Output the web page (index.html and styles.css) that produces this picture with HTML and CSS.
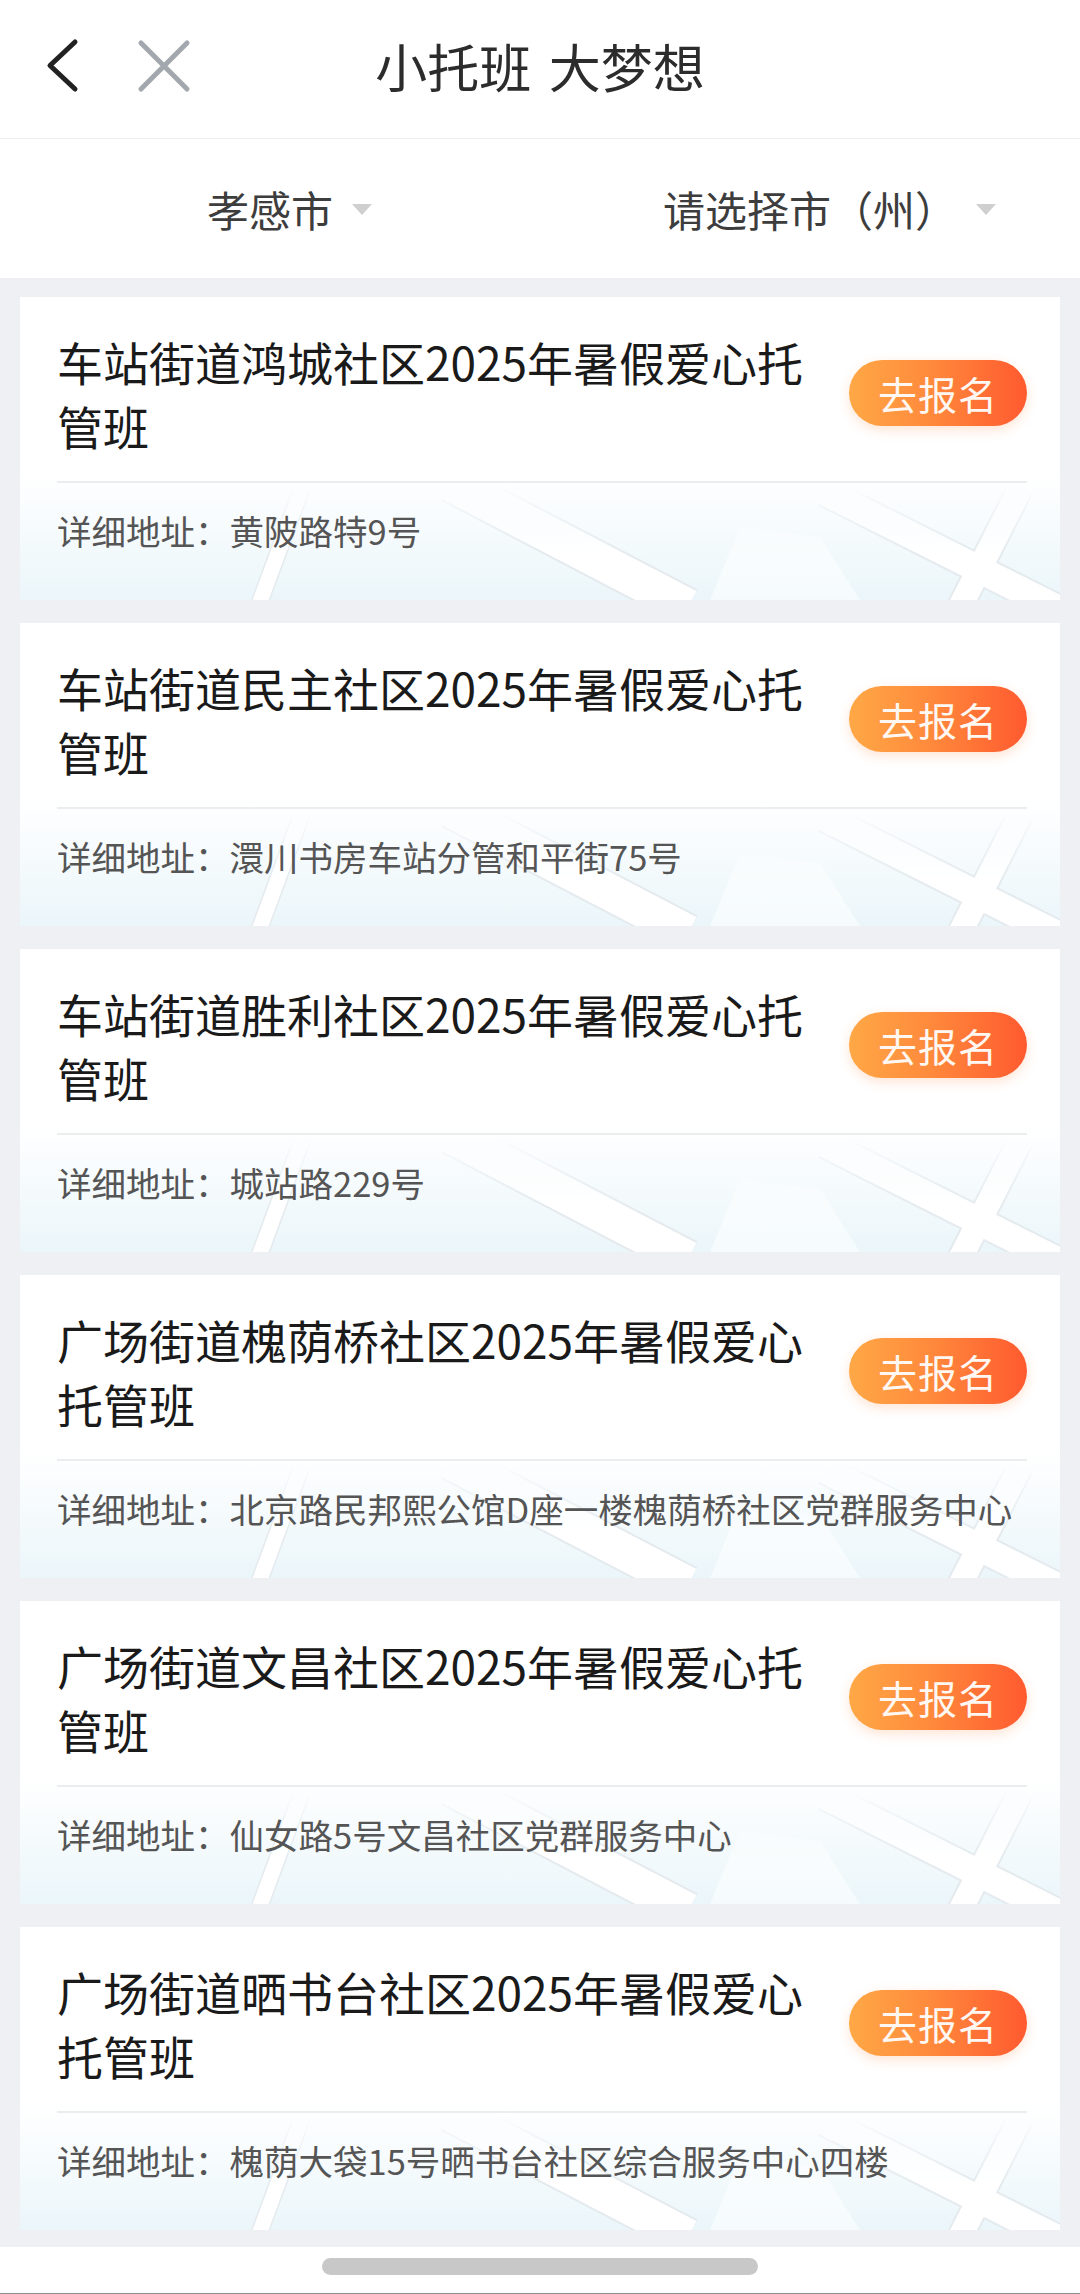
FILE: index.html
```html
<!DOCTYPE html>
<html lang="zh-CN">
<head>
<meta charset="utf-8">
<title>小托班 大梦想</title>
<link rel="stylesheet" href="styles.css">
</head>
<body>
<div class="page">
  <header class="topbar">
    <div class="topbar-left">
      <svg class="icon-back" width="36" height="56" viewBox="0 0 36 56"><path d="M31 4 L6 27.5 L31 51" fill="none" stroke="#222" stroke-width="5" stroke-linecap="round" stroke-linejoin="round"/></svg>
      <svg class="icon-close" width="56" height="56" viewBox="0 0 56 56"><path d="M5 5 L51 51 M51 5 L5 51" fill="none" stroke="#a3a7ae" stroke-width="5" stroke-linecap="round"/></svg>
    </div>
    <h1 class="topbar-title">小托班 大梦想</h1>
    <div></div>
  </header>

  <nav class="filters">
    <div class="filter"><span class="filter-text">孝感市</span><span class="caret"></span></div>
    <div class="filter"><span class="filter-text">请选择市（州）</span><span class="caret"></span></div>
  </nav>

  <main class="list">
    <section class="card">
      <div class="card-top">
        <h2 class="card-title">车站街道鸿城社区2025年暑假爱心托管班</h2>
        <a class="btn">去报名</a>
      </div>
      <div class="card-sep"></div>
      <p class="card-addr">详细地址：黄陂路特9号</p>
    </section>
    <section class="card">
      <div class="card-top">
        <h2 class="card-title">车站街道民主社区2025年暑假爱心托管班</h2>
        <a class="btn">去报名</a>
      </div>
      <div class="card-sep"></div>
      <p class="card-addr">详细地址：澴川书房车站分管和平街75号</p>
    </section>
    <section class="card">
      <div class="card-top">
        <h2 class="card-title">车站街道胜利社区2025年暑假爱心托管班</h2>
        <a class="btn">去报名</a>
      </div>
      <div class="card-sep"></div>
      <p class="card-addr">详细地址：城站路229号</p>
    </section>
    <section class="card">
      <div class="card-top">
        <h2 class="card-title">广场街道槐荫桥社区2025年暑假爱心托管班</h2>
        <a class="btn">去报名</a>
      </div>
      <div class="card-sep"></div>
      <p class="card-addr">详细地址：北京路民邦熙公馆D座一楼槐荫桥社区党群服务中心</p>
    </section>
    <section class="card">
      <div class="card-top">
        <h2 class="card-title">广场街道文昌社区2025年暑假爱心托管班</h2>
        <a class="btn">去报名</a>
      </div>
      <div class="card-sep"></div>
      <p class="card-addr">详细地址：仙女路5号文昌社区党群服务中心</p>
    </section>
    <section class="card">
      <div class="card-top">
        <h2 class="card-title">广场街道晒书台社区2025年暑假爱心托管班</h2>
        <a class="btn">去报名</a>
      </div>
      <div class="card-sep"></div>
      <p class="card-addr">详细地址：槐荫大袋15号晒书台社区综合服务中心四楼</p>
    </section>
  </main>

  <footer class="homebar"><span class="pill"></span></footer>
</div>
</body>
</html>
```

FILE: styles.css
```css
* { box-sizing: border-box; }
html, body {
  margin: 0;
  padding: 0;
  background: #eef0f3;
}
body {
  font-family: "Noto Sans CJK SC", "Noto Sans", sans-serif;
  color: #1c1c1c;
}
.page {
  width: 1080px;
  height: 2294px;
  display: flex;
  flex-direction: column;
  overflow: hidden;
}

/* top bar */
.topbar {
  height: 139px;
  background: #fff;
  border-bottom: 1px solid #ececec;
  display: grid;
  grid-template-columns: 1fr auto 1fr;
  align-items: center;
  padding-bottom: 6px;
}
.topbar-left {
  display: flex;
  align-items: center;
  padding-left: 44px;
  gap: 56px;
}
.icon-back, .icon-close { display: block; }
.topbar-title {
  margin: 0;
  font-size: 52px;
  font-weight: 400;
  color: #2c2c2c;
  line-height: 1;
  word-spacing: 6px;
}

/* filters */
.filters {
  height: 139px;
  background: #fff;
  display: grid;
  grid-template-columns: 1fr 1fr;
  align-items: center;
}
.filter {
  display: flex;
  justify-content: center;
  align-items: center;
}
.filter-text {
  font-size: 42px;
  color: #3d3d3d;
  line-height: 1;
}
.caret {
  width: 0;
  height: 0;
  border-left: 10px solid transparent;
  border-right: 10px solid transparent;
  border-top: 11px solid #cfcfcf;
  margin-left: 19px;
  margin-right: -39px;
  margin-top: 2px;
}

/* list */
.list {
  flex: 1;
  padding: 19px 20px 17px 20px;
  display: flex;
  flex-direction: column;
  gap: 23px;
}
.card {
  height: 303px;
  padding: 0 33px 0 37px;
  background-color: #fff;
  background-image:
    url("data:image/svg+xml;utf8,<svg xmlns='http://www.w3.org/2000/svg' width='1040' height='303' viewBox='0 0 1040 303'><defs><linearGradient id='g' x1='0' y1='0' x2='0' y2='1'><stop offset='0.62' stop-color='white' stop-opacity='0'/><stop offset='0.85' stop-color='white' stop-opacity='1'/></linearGradient><mask id='m'><rect width='1040' height='303' fill='url(%23g)'/></mask></defs><g mask='url(%23m)' fill='none'><path d='M283 188 L238 310' stroke='%23e4eaee' stroke-width='18'/><path d='M283 188 L238 310' stroke='%23ffffff' stroke-width='15'/><path d='M430 186 L668 310' stroke='%23e4eaee' stroke-width='40'/><path d='M430 186 L668 310' stroke='%23ffffff' stroke-width='36'/><path d='M805 195 L1050 318' stroke='%23e4eaee' stroke-width='31'/><path d='M1000 192 L940 310' stroke='%23e4eaee' stroke-width='28'/><path d='M805 195 L1050 318' stroke='%23ffffff' stroke-width='27'/><path d='M1000 192 L940 310' stroke='%23ffffff' stroke-width='24'/><path d='M690 303 L720 230 L800 240 L840 303 Z' fill='%23ffffff' stroke='none' opacity='0.5'/></g></svg>"),
    linear-gradient(180deg, #ffffff 0%, #ffffff 58%, #ebf6fa 100%);
  background-repeat: no-repeat;
  background-size: 100% 100%, 100% 100%;
  display: flex;
  flex-direction: column;
}
.card-top {
  display: flex;
  align-items: center;
  gap: 22px;
  padding: 32px 0 24px 0;
}
.card-title {
  flex: 1;
  margin: 0;
  font-size: 46px;
  font-weight: 400;
  line-height: 64px;
  color: #1a1a1a;
}
.btn {
  flex: none;
  width: 178px;
  height: 66px;
  border-radius: 33px;
  background: linear-gradient(90deg, #ffa846 0%, #ff8a3c 45%, #ff5a2f 100%);
  box-shadow: 0 4px 12px rgba(255, 130, 60, 0.22);
  color: #fff8f2;
  font-size: 39px;
  line-height: 66px;
  text-align: center;
  letter-spacing: 1px;
}
.card-sep {
  height: 2px;
  background: #ebedef;
}
.card-addr {
  margin: 0;
  padding: 24px 0 47px 0;
  font-size: 34.5px;
  line-height: 46px;
  color: #555;
  white-space: nowrap;
}

/* home indicator */
.homebar {
  height: 47px;
  background: #fff;
  border-bottom: 1px solid #8e8e8e;
  display: flex;
  justify-content: center;
  padding-top: 11px;
}
.pill {
  width: 436px;
  height: 17px;
  border-radius: 9px;
  background: #c8c8c8;
}
```
